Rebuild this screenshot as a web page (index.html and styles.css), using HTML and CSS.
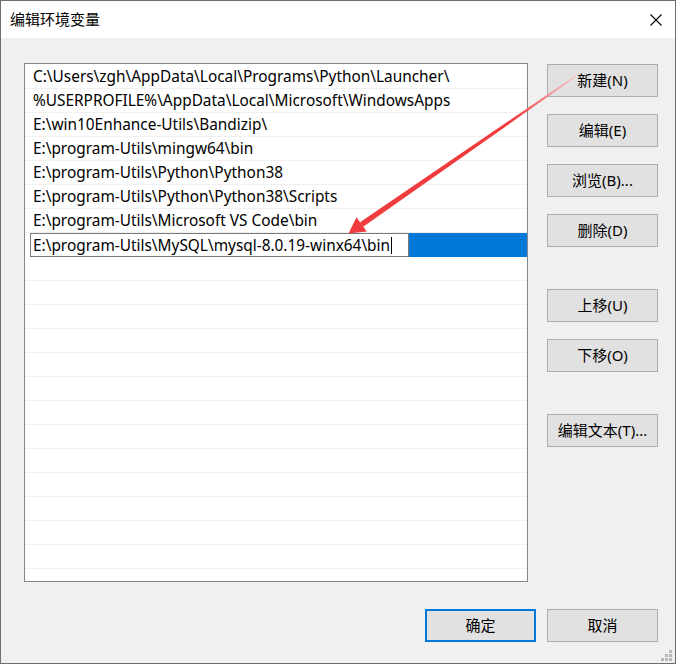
FILE: index.html
```html
<!DOCTYPE html>
<html lang="zh-CN">
<head>
<meta charset="utf-8">
<title>编辑环境变量</title>
<link rel="stylesheet" href="styles.css">
</head>
<body>
<div class="window">
  <div class="titlebar">
    <span class="title">编辑环境变量</span>
    <svg class="close" width="12" height="12" viewBox="0 0 12 12"><path d="M0.5 0.5 L11.5 11.5 M11.5 0.5 L0.5 11.5" stroke="#000" stroke-width="1.1" fill="none"/></svg>
  </div>
  <div class="content">
    <div class="main">
      <div class="list">
        <div class="row">C:\Users\zgh\AppData\Local\Programs\Python\Launcher\</div>
        <div class="row">%USERPROFILE%\AppData\Local\Microsoft\WindowsApps</div>
        <div class="row">E:\win10Enhance-Utils\Bandizip\</div>
        <div class="row">E:\program-Utils\mingw64\bin</div>
        <div class="row">E:\program-Utils\Python\Python38</div>
        <div class="row">E:\program-Utils\Python\Python38\Scripts</div>
        <div class="row">E:\program-Utils\Microsoft VS Code\bin</div>
        <div class="row selected">
          <div class="edit">E:\program-Utils\MySQL\mysql-8.0.19-winx64\bin<span class="caret"></span></div>
          <div class="highlight"></div>
        </div>
      </div>
      <div class="buttons">
        <button class="btn">新建(N)</button>
        <button class="btn">编辑(E)</button>
        <button class="btn">浏览(B)...</button>
        <button class="btn">删除(D)</button>
        <button class="btn group">上移(U)</button>
        <button class="btn">下移(O)</button>
        <button class="btn group">编辑文本(T)...</button>
      </div>
    </div>
    <div class="footer">
      <button class="btn primary">确定</button>
      <button class="btn">取消</button>
    </div>
  </div>
  <svg class="overlay" width="677" height="664" viewBox="0 0 677 664">
    <defs>
      <linearGradient id="fade" gradientUnits="userSpaceOnUse" x1="576" y1="76" x2="515" y2="118">
        <stop offset="0" stop-color="#f7c9c9"/>
        <stop offset="1" stop-color="#f03c3c"/>
      </linearGradient>
    </defs>
    <polygon points="576.5,76.6 575.5,75.4 360.0,222.2 363.2,226.7" fill="url(#fade)"/>
    <polygon points="348.5,233.5 356.5,217.2 366.8,231.6" fill="#f03c3c"/>
  </svg>
  <svg class="grip" width="12" height="12" viewBox="0 0 12 12">
    <rect x="8" y="0" width="3" height="3" fill="#b8b8b8"/>
    <rect x="4" y="4" width="3" height="3" fill="#b8b8b8"/>
    <rect x="8" y="4" width="3" height="3" fill="#b8b8b8"/>
    <rect x="0" y="8" width="3" height="3" fill="#b8b8b8"/>
    <rect x="4" y="8" width="3" height="3" fill="#b8b8b8"/>
    <rect x="8" y="8" width="3" height="3" fill="#b8b8b8"/>
  </svg>
</div>
</body>
</html>
```

FILE: styles.css
```css
html, body {
  margin: 0;
  padding: 0;
  background: #ffffff;
}

body {
  width: 677px;
  height: 664px;
  overflow: hidden;
  font-family: "Noto Sans", "Noto Sans CJK SC", sans-serif;
  font-size: 15px;
  color: #000;
}

.window {
  position: relative;
  width: 676px;
  height: 664px;
  box-sizing: border-box;
  border: 1px solid #6e6e6e;
  background: #f0f0f0;
  display: flex;
  flex-direction: column;
}

.titlebar {
  height: 37px;
  flex: none;
  background: #fff;
  display: flex;
  align-items: center;
  padding-left: 9px;
}

.title {
  font-family: "Noto Sans CJK SC", sans-serif;
  font-size: 15px;
  line-height: 20px;
  margin-top: -1px;
}

.close {
  margin-left: auto;
  margin-right: 13px;
  display: block;
}

.content {
  flex: 1;
  display: flex;
  flex-direction: column;
  padding: 25px 17px 21px 23px;
}

.main {
  display: flex;
  gap: 19px;
}

.list {
  width: 504px;
  height: 519px;
  box-sizing: border-box;
  border: 1px solid #828790;
  padding-top: 1px;
  overflow: hidden;
  background-color: #fff;
  background-image: repeating-linear-gradient(to bottom, #fff 0, #fff 23px, #f0f0f0 23px, #f0f0f0 24px);
  background-position: 0 1px;
  background-repeat: repeat-y;
  font-size: 15.4px;
}

.row {
  height: 24px;
  box-sizing: border-box;
  border-bottom: 1px solid #f0f0f0;
  background: #fff;
  padding-left: 8px;
  line-height: 24px;
  white-space: nowrap;
}

.row.selected {
  border-bottom: none;
  padding-left: 5px;
  display: flex;
}

.edit {
  width: 379px;
  flex: none;
  height: 24px;
  box-sizing: border-box;
  border: 1px solid #7a7a7a;
  background: #fff;
  padding-left: 2px;
  line-height: 23px;
  white-space: nowrap;
  overflow: hidden;
}

.highlight {
  flex: 1;
  height: 24px;
  background: #0078d7;
}

.caret {
  display: inline-block;
  width: 1px;
  height: 17px;
  background: #000;
  vertical-align: -3px;
  margin-left: 1px;
}

.buttons {
  display: flex;
  flex-direction: column;
  gap: 17px;
  padding-top: 1px;
}

.btn {
  width: 111px;
  height: 33px;
  box-sizing: border-box;
  border: 1px solid #adadad;
  background: #e1e1e1;
  font-family: "Noto Sans", "Noto Sans CJK SC", sans-serif;
  font-size: 15px;
  color: #000;
  padding: 0 0 3px 0;
  margin: 0;
}

.btn.group {
  margin-top: 25px;
}

.btn.primary {
  border: 2px solid #0078d7;
}

.footer {
  margin-top: auto;
  display: flex;
  justify-content: flex-end;
  gap: 11px;
}

.overlay {
  position: absolute;
  left: -1px;
  top: -1px;
  pointer-events: none;
}

.grip {
  position: absolute;
  right: 2px;
  bottom: 1px;
}
```
